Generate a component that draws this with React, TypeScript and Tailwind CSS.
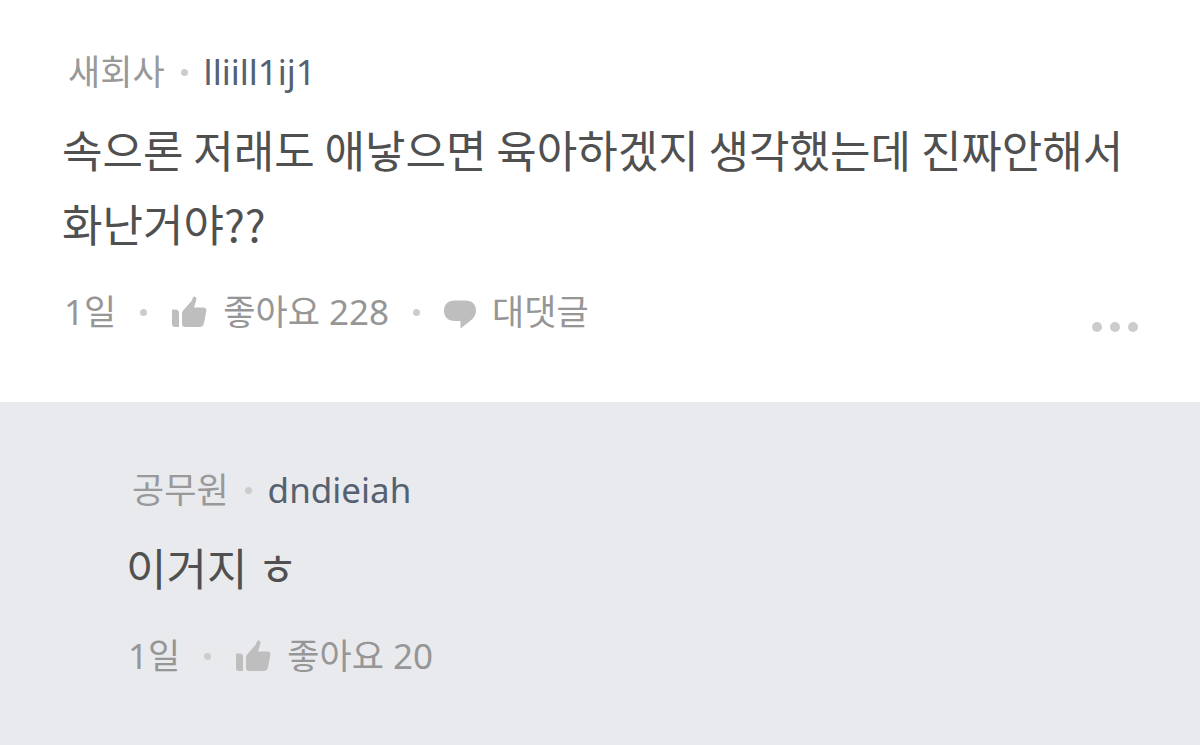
import React from "react";

interface CommentProps {
  company: string;
  nickname: string;
  body: string;
  age: string;
  likes: number;
  isReply?: boolean;
}

function Dot() {
  return <span className="mx-6 h-[7px] w-[7px] shrink-0 rounded-full bg-[#cccccc]" />;
}

function ThumbIcon() {
  return (
    <svg className="h-8 w-9 shrink-0" viewBox="0 0 36 32" fill="#bebebe" aria-hidden="true">
      <path d="M1 14.500Q1 13.500 2 13.500H4.500Q8 13.500 8 17V31H4Q1 31 1 28z" />
      <path d="M11 17.500Q11 15.500 12.500 14L20.500 5 22 1.500Q22.800 .2 24.300 .8 26 1.500 25.300 4L23 11.500H32.500Q35.800 11.500 35.300 15L33 27Q32.200 31 28.500 31H14Q11 31 11 28z" />
    </svg>
  );
}

function BubbleIcon() {
  return (
    <svg className="h-8 w-8 shrink-0" viewBox="0 0 32 32" fill="#bebebe" aria-hidden="true">
      <path d="M11 4.500H21.500C28 4.500 32 8.500 32 14.500 32 19 29.500 22.500 25.500 25.500L16.500 32.500V25H11C4 25 0 21 0 14.700 0 8.500 4 4.500 11 4.500z" />
    </svg>
  );
}

function Comment({ company, nickname, body, age, likes, isReply = false }: CommentProps) {
  return (
    <article>
      <header className="flex items-center pl-1.5 text-[35px] leading-[52px]">
        <span className="text-[#999999]">{company}</span>
        <span className="mx-4 h-[7px] w-[7px] shrink-0 rounded-full bg-[#cccccc]" />
        <a href="#" className="text-[#556070]">
          {nickname}
        </a>
      </header>
      <p className="mt-3.5 font-['Noto_Sans_CJK_KR',sans-serif] text-[44px] leading-[74px] text-[#505050]">
        {body}
      </p>
      <footer className="mt-[26px] flex items-center pl-0.5 text-[35px] leading-[52px] text-[#969696]">
        <span>{age}</span>
        <Dot />
        <button type="button" className="flex items-center gap-4">
          <ThumbIcon />
          좋아요 {likes}
        </button>
        {!isReply && (
          <>
            <Dot />
            <button type="button" className="flex items-center gap-4">
              <BubbleIcon />
              대댓글
            </button>
            <button type="button" aria-label="더보기" className="ml-auto flex gap-2 self-end pb-1.5">
              <span className="h-2.5 w-2.5 rounded-full bg-[#cccccc]" />
              <span className="h-2.5 w-2.5 rounded-full bg-[#cccccc]" />
              <span className="h-2.5 w-2.5 rounded-full bg-[#cccccc]" />
            </button>
          </>
        )}
      </footer>
    </article>
  );
}

export default function App() {
  return (
    <main className="flex min-h-screen flex-col bg-white font-['Noto_Sans','Noto_Sans_CJK_KR',sans-serif]">
      <section className="px-[62px] pt-[46px] pb-16">
        <Comment
          company="새회사"
          nickname="lliill1ij1"
          body="속으론 저래도 애낳으면 육아하겠지 생각했는데 진짜안해서 화난거야??"
          age="1일"
          likes={228}
        />
      </section>
      <section className="flex-1 bg-[#e9eaee] px-[126px] pt-[62px] pb-16">
        <Comment company="공무원" nickname="dndieiah" body="이거지 ㅎ" age="1일" likes={20} isReply />
      </section>
    </main>
  );
}
